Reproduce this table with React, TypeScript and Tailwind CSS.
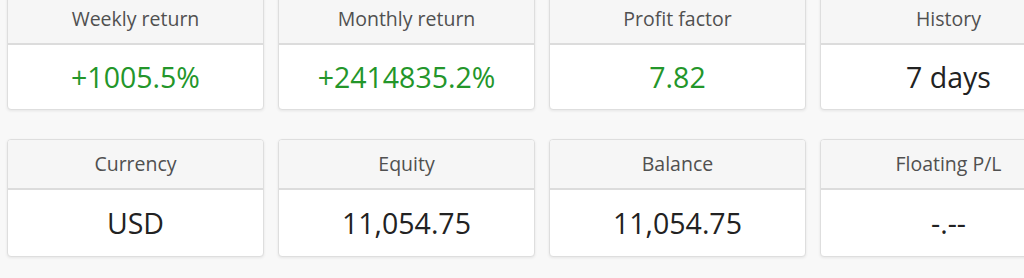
import React from "react";

type Item = { label: string; value: string; green?: boolean };

const row1: Item[] = [
  { label: "Weekly return", value: "+1005.5%", green: true },
  { label: "Monthly return", value: "+2414835.2%", green: true },
  { label: "Profit factor", value: "7.82", green: true },
  { label: "History", value: "7 days" },
];
const row2: Item[] = [
  { label: "Currency", value: "USD" },
  { label: "Equity", value: "11,054.75" },
  { label: "Balance", value: "11,054.75" },
  { label: "Floating P/L", value: "-.--" },
];

function Card({ item, bodyH }: { item: Item; bodyH: string }) {
  return (
    <div className="w-[257px] shrink-0 rounded-[4px] border border-[#dedede] bg-white shadow-[0_1px_3px_rgba(0,0,0,0.08)] overflow-hidden">
      <div className="h-[50px] flex items-center justify-center bg-[#f6f6f6] border-b-2 border-[#dcdcdc] text-[19.5px] text-[#505050]">
        {item.label}
      </div>
      <div
        className={`${bodyH} flex items-center justify-center text-[28.5px] ${
          item.green ? "text-[#23962a]" : "text-[#222222]"
        }`}
      >
        {item.value}
      </div>
    </div>
  );
}

export default function App() {
  return (
    <div
      className="w-[1024px] h-[278px] overflow-hidden bg-[#f8f8f8]"
      style={{ fontFamily: '"Open Sans", "Noto Sans", sans-serif' }}
    >
      <div className="flex gap-[14px] pl-[7px] mt-[-6px]">
        {row1.map((it) => (
          <Card key={it.label} item={it} bodyH="h-[64px]" />
        ))}
      </div>
      <div className="flex gap-[14px] pl-[7px] mt-[29px]">
        {row2.map((it) => (
          <Card key={it.label} item={it} bodyH="h-[66px]" />
        ))}
      </div>
    </div>
  );
}
